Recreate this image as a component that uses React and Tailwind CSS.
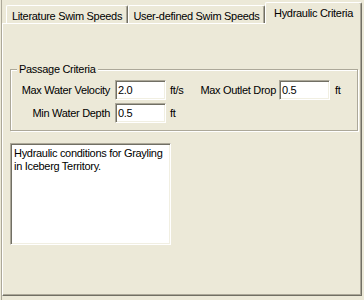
export default function App() {
  const tabBase =
    "shrink-0 border-t border-l border-r border-t-white border-l-white border-r-[#716F64] shadow-[inset_-1px_0_0_#ACA899] rounded-t-[2px] text-center whitespace-nowrap";
  const sunken =
    "border border-t-[#ACA899] border-l-[#ACA899] border-b-white border-r-white shadow-[inset_1px_1px_0_#716F64,inset_-1px_-1px_0_#F1EFE2] bg-white";
  return (
    <div className="w-[364px] h-[300px] bg-[#ECE9D8] flex overflow-hidden font-['Liberation_Sans',Arial,sans-serif] text-[11px] leading-[13px] tracking-[-0.3px] text-black">
      <div className="w-px shrink-0" />
      <div className="w-px shrink-0 bg-[#ACA899]" />
      <div className="flex flex-col w-[362px] shrink-0">
        {/* tab strip */}
        <div className="relative z-10 flex items-end h-[23px] pl-[4px]">
          <div className={`${tabBase} w-[122px] h-[18px] pt-[4px]`}>
            Literature Swim Speeds
          </div>
          <div className={`${tabBase} w-[137px] h-[18px] pt-[4px]`}>
            User-defined Swim Speeds
          </div>
          <div
            className={`${tabBase} w-[97px] h-[22px] mb-[-1px] bg-[#ECE9D8] pt-[4px]`}
          >
            Hydraulic Criteria
          </div>
        </div>
        {/* panel */}
        <div className="w-[360px] h-[273px] flex flex-col border-t border-l border-r border-b border-t-white border-l-white border-r-[#716F64] border-b-[#716F64] shadow-[inset_-1px_-1px_0_#ACA899]">
          {/* group box */}
          <div className="ml-[7px] mt-[45px] w-[348px] flex flex-col border border-[#ACA899] shadow-[inset_1px_1px_0_#fff,1px_1px_0_#fff] pb-[7px]">
            <div className="self-start -mt-[7px] ml-[6px] px-[2px] bg-[#ECE9D8]">
              Passage Criteria
            </div>
            <div className="mt-[4px] flex flex-col gap-[3px]">
              <div className="flex items-center h-[20px]">
                <div className="w-[99px] text-right whitespace-nowrap">
                  Max Water Velocity
                </div>
                <div className={`${sunken} ml-[5px] w-[51px] h-[20px] flex items-center pl-[2px]`}>
                  2.0
                </div>
                <div className="w-[33px] pl-[4px]">ft/s</div>
                <div className="w-[77px] text-right whitespace-nowrap">
                  Max Outlet Drop
                </div>
                <div className={`${sunken} ml-[3px] w-[51px] h-[20px] flex items-center pl-[2px]`}>
                  0.5
                </div>
                <div className="pl-[5px]">ft</div>
              </div>
              <div className="flex items-center h-[20px]">
                <div className="w-[99px] text-right whitespace-nowrap">
                  Min Water Depth
                </div>
                <div className={`${sunken} ml-[5px] w-[51px] h-[20px] flex items-center pl-[2px]`}>
                  0.5
                </div>
                <div className="pl-[4px]">ft</div>
              </div>
            </div>
          </div>
          {/* text area */}
          <div className={`${sunken} ml-[7px] mt-[12px] w-[161px] h-[102px] pl-[3px] pt-[3px]`}>
            Hydraulic conditions for Grayling
            <br />
            in Iceberg Territory.
          </div>
        </div>
      </div>
    </div>
  );
}
